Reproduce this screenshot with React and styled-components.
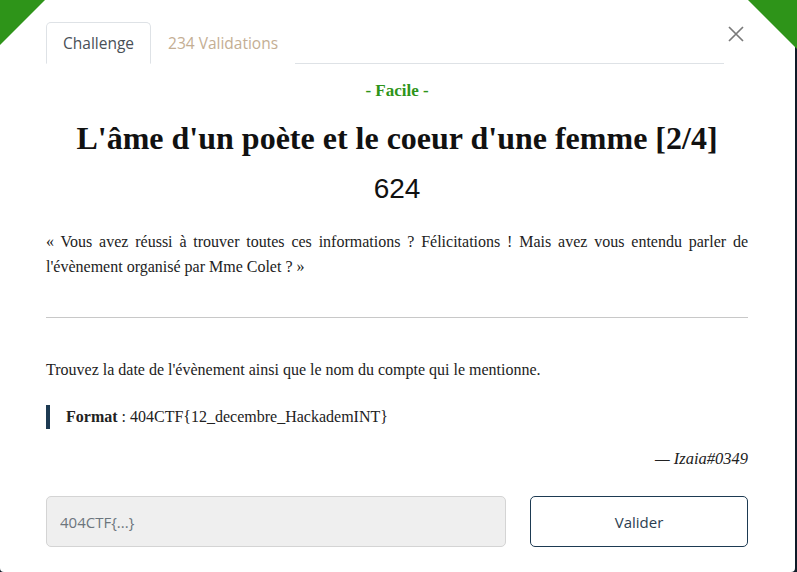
import React from 'react';
import styled, { createGlobalStyle } from 'styled-components';

const green = '#2e9419';
const navy = '#1d3a52';

const GlobalStyle = createGlobalStyle`
  html, body {
    margin: 0;
    padding: 0;
    background: #0e1b28;
    width: 797px;
    height: 572px;
    overflow: hidden;
  }
`;

export default function App() {
  return (
    <>
      <GlobalStyle />
      <Stage>
        <Modal>
          <Ribbon side="left" />
          <Ribbon side="right" />
          <Header>
            <Tabs>
              <Tab active>Challenge</Tab>
              <Tab>234 Validations</Tab>
            </Tabs>
            <CloseButton aria-label="close">
              <svg width="16" height="16" viewBox="0 0 16 16">
                <path d="M1 1L15 15M15 1L1 15" stroke="#7a7a7a" strokeWidth="1.7" />
              </svg>
            </CloseButton>
          </Header>
          <Body>
            <Difficulty>- Facile -</Difficulty>
            <Title>L'âme d'un poète et le coeur d'une femme [2/4]</Title>
            <Points>624</Points>
            <Text>
              « Vous avez réussi à trouver toutes ces informations ? Félicitations ! Mais avez vous entendu parler de
              l'évènement organisé par Mme Colet ? »
            </Text>
            <Rule />
            <Text>Trouvez la date de l'évènement ainsi que le nom du compte qui le mentionne.</Text>
            <Quote>
              <b>Format</b> : 404CTF{'{'}12_decembre_HackademINT{'}'}
            </Quote>
            <Author>— Izaia#0349</Author>
          </Body>
          <Footer>
            <FlagInput placeholder="404CTF{...}" />
            <SubmitButton>Valider</SubmitButton>
          </Footer>
        </Modal>
      </Stage>
    </>
  );
}

const Stage = styled.div`
  width: 797px;
  height: 572px;
  display: flex;
`;

const Modal = styled.div`
  position: relative;
  width: 795px;
  height: 572px;
  box-sizing: border-box;
  background: #fff;
  border-radius: 0 0 4px 4px;
  padding: 22px 47px 0 46px;
  display: flex;
  flex-direction: column;
`;

const Ribbon = styled.div`
  position: absolute;
  top: 0;
  ${p => (p.side === 'left' ? 'left: 0;' : 'right: -2px;')}
  width: ${p => (p.side === 'left' ? '45px' : '49px')};
  height: ${p => (p.side === 'left' ? '45px' : '49px')};
  background: ${green};
  clip-path: ${p =>
    p.side === 'left'
      ? 'polygon(0 0, 100% 0, 0 100%)'
      : 'polygon(0 0, 100% 0, 100% 100%)'};
`;

const Header = styled.div`
  display: flex;
  align-items: flex-start;
`;

const Tabs = styled.div`
  flex: 1;
  display: flex;
  border-bottom: 1px solid #dee2e6;
  height: 41px;
`;

const Tab = styled.div`
  height: 42px;
  box-sizing: border-box;
  padding: 0 16px;
  margin-bottom: -1px;
  display: flex;
  align-items: center;
  font-family: 'Open Sans', sans-serif;
  font-size: 15.5px;
  font-weight: 500;
  color: ${p => (p.active ? '#495057' : '#c4ae93')};
  background: #fff;
  border: 1px solid ${p => (p.active ? '#dee2e6' : 'transparent')};
  border-bottom-color: ${p => (p.active ? '#fff' : 'transparent')};
  border-radius: 5px 5px 0 0;
`;

const CloseButton = styled.button`
  border: none;
  background: none;
  padding: 0;
  margin: 4px 4px 0 4px;
  width: 16px;
  height: 16px;
  cursor: pointer;
`;

const Body = styled.div`
  display: flex;
  flex-direction: column;
  font-family: 'Liberation Serif', 'Times New Roman', serif;
  color: #222;
`;

const Difficulty = styled.div`
  margin-top: 17px;
  text-align: center;
  color: ${green};
  font-weight: bold;
  font-size: 17px;
  line-height: 20px;
`;

const Title = styled.h1`
  margin: 18px 0 0;
  text-align: center;
  font-size: 32px;
  line-height: 38px;
  color: #111;
`;

const Points = styled.div`
  margin-top: 16px;
  text-align: center;
  font-family: 'Liberation Sans', Arial, sans-serif;
  font-size: 28px;
  line-height: 32px;
  color: #111;
`;

const Text = styled.p`
  margin: 24px 0 0;
  font-size: 16px;
  line-height: 25px;
  text-align: justify;
  color: #222;
`;

const Rule = styled.hr`
  margin: 38px 0 15px;
  border: none;
  border-top: 1px solid #c8c8c8;
  width: 100%;
`;

const Quote = styled.blockquote`
  margin: 23px 0 0;
  padding: 0 0 0 16px;
  border-left: 4px solid ${navy};
  font-size: 16px;
  line-height: 24px;
  color: #222;
`;

const Author = styled.div`
  margin-top: 18px;
  text-align: right;
  font-style: italic;
  font-size: 16.5px;
  line-height: 24px;
  color: #222;
`;

const Footer = styled.div`
  margin-top: 25px;
  display: flex;
  gap: 24px;
`;

const FlagInput = styled.input`
  flex: 0 0 460px;
  height: 51px;
  box-sizing: border-box;
  padding: 0 13px;
  background: #efefef;
  border: 1px solid #d4d4d4;
  border-radius: 5px;
  font-family: 'Open Sans', sans-serif;
  font-size: 15px;
  color: #495057;
  outline: none;
  &::placeholder {
    color: #6c757d;
  }
`;

const SubmitButton = styled.button`
  flex: 1;
  height: 51px;
  background: #fff;
  border: 1px solid ${navy};
  border-radius: 5px;
  font-family: 'Open Sans', sans-serif;
  font-size: 15px;
  color: #2c3e50;
  cursor: pointer;
`;
